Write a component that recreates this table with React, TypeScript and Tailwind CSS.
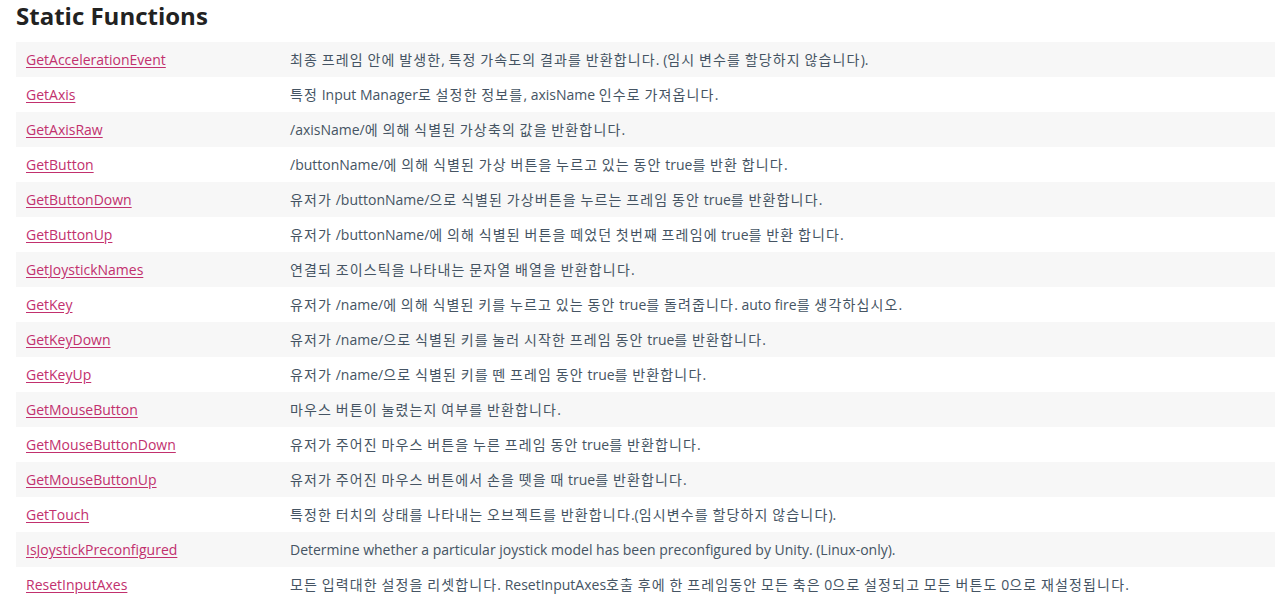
import React from "react";

const rows: [string, string][] = [
  ["GetAccelerationEvent", "최종 프레임 안에 발생한, 특정 가속도의 결과를 반환합니다. (임시 변수를 할당하지 않습니다)."],
  ["GetAxis", "특정 Input Manager로 설정한 정보를, axisName 인수로 가져옵니다."],
  ["GetAxisRaw", "/axisName/에 의해 식별된 가상축의 값을 반환합니다."],
  ["GetButton", "/buttonName/에 의해 식별된 가상 버튼을 누르고 있는 동안 true를 반환 합니다."],
  ["GetButtonDown", "유저가 /buttonName/으로 식별된 가상버튼을 누르는 프레임 동안 true를 반환합니다."],
  ["GetButtonUp", "유저가 /buttonName/에 의해 식별된 버튼을 떼었던 첫번째 프레임에 true를 반환 합니다."],
  ["GetJoystickNames", "연결되 조이스틱을 나타내는 문자열 배열을 반환합니다."],
  ["GetKey", "유저가 /name/에 의해 식별된 키를 누르고 있는 동안 true를 돌려줍니다. auto fire를 생각하십시오."],
  ["GetKeyDown", "유저가 /name/으로 식별된 키를 눌러 시작한 프레임 동안 true를 반환합니다."],
  ["GetKeyUp", "유저가 /name/으로 식별된 키를 뗀 프레임 동안 true를 반환합니다."],
  ["GetMouseButton", "마우스 버튼이 눌렸는지 여부를 반환합니다."],
  ["GetMouseButtonDown", "유저가 주어진 마우스 버튼을 누른 프레임 동안 true를 반환합니다."],
  ["GetMouseButtonUp", "유저가 주어진 마우스 버튼에서 손을 뗏을 때 true를 반환합니다."],
  ["GetTouch", "특정한 터치의 상태를 나타내는 오브젝트를 반환합니다.(임시변수를 할당하지 않습니다)."],
  ["IsJoystickPreconfigured", "Determine whether a particular joystick model has been preconfigured by Unity. (Linux-only)."],
  ["ResetInputAxes", "모든 입력대한 설정을 리셋합니다. ResetInputAxes호출 후에 한 프레임동안 모든 축은 0으로 설정되고 모든 버튼도 0으로 재설정됩니다."],
];

// korean runs get a bit of extra spacing, the reference font is wider
function Desc({ text }: { text: string }) {
  const parts = text.split(/([\uAC00-\uD7A3]+)/);
  return (
    <>
      {parts.map((p, i) =>
        /[\uAC00-\uD7A3]/.test(p) ? (
          <span key={i} className="tracking-[1.15px]">
            {p}
          </span>
        ) : (
          <span key={i}>{p}</span>
        )
      )}
    </>
  );
}

export default function App() {
  return (
    <div
      className="w-[1275px] h-[615px] overflow-hidden bg-white pl-4"
      style={{ fontFamily: '"Open Sans", "Noto Sans CJK KR", sans-serif' }}
    >
      <h2 className="text-[24px] font-bold leading-[32px] text-[#222222]">Static Functions</h2>
      <div className="mt-[10px] w-[1275px]">
        {rows.map(([name, desc], i) => (
          <div
            key={name}
            className={`flex h-[35px] items-center text-[14px] ${i % 2 === 0 ? "bg-[#f7f7f7]" : "bg-white"}`}
          >
            <div className="w-[264px] shrink-0 px-[10px]">
              <a href="#" className="text-[#c2306e] underline underline-offset-2">
                {name}
              </a>
            </div>
            <div className="px-[10px] text-[#455463] whitespace-nowrap">
              <Desc text={desc} />
            </div>
          </div>
        ))}
      </div>
    </div>
  );
}
